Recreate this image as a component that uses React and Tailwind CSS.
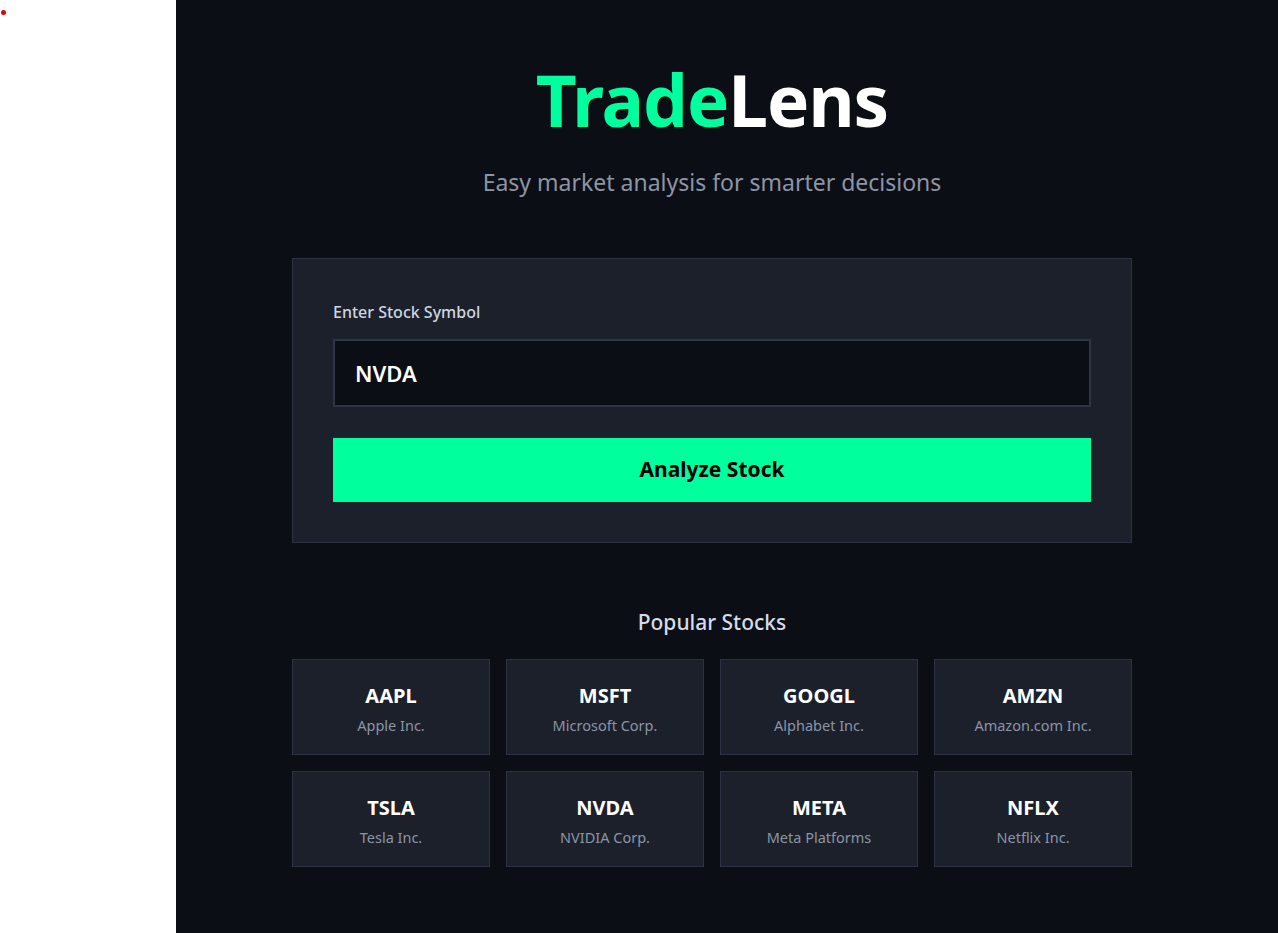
import React, { useState } from "react";

const stocks = [
  { symbol: "AAPL", name: "Apple Inc." },
  { symbol: "MSFT", name: "Microsoft Corp." },
  { symbol: "GOOGL", name: "Alphabet Inc." },
  { symbol: "AMZN", name: "Amazon.com Inc." },
  { symbol: "TSLA", name: "Tesla Inc." },
  { symbol: "NVDA", name: "NVIDIA Corp." },
  { symbol: "META", name: "Meta Platforms" },
  { symbol: "NFLX", name: "Netflix Inc." },
];

export default function App() {
  const [symbol, setSymbol] = useState("NVDA");

  return (
    <div className="min-h-screen flex font-['Noto_Sans',sans-serif]">
      <aside className="w-[176px] shrink-0 bg-white pt-[10px] pl-[1px]">
        <div className="w-[5px] h-[5px] rounded-full bg-red-600" />
      </aside>

      <main className="flex-1 bg-[#0b0e15] pr-[30px] pt-[58px] pb-[66px]">
        <div className="w-[840px] mx-auto">
          <h1 className="text-center text-[71px] leading-[84px] font-bold tracking-[-1px]">
            <span className="text-[#00ff9d]">Trade</span>
            <span className="text-white">Lens</span>
          </h1>
          <p className="mt-[24px] text-center text-[23px] leading-[32px] text-[#8b95a5]">
            Easy market analysis for smarter decisions
          </p>

          <div className="mt-[60px] bg-[#1b202b] border border-[#2c3242] px-[40px] pt-[41px] pb-[40px]">
            <label className="block text-[16px] leading-[24px] font-medium text-[#cfd6e0]">
              Enter Stock Symbol
            </label>
            <input
              value={symbol}
              onChange={(e) => setSymbol(e.target.value.toUpperCase())}
              className="mt-[15px] w-full h-[68px] bg-[#0b0e15] border-2 border-[#2d3446] px-[20px] text-[22px] font-semibold text-white outline-none"
            />
            <button className="mt-[31px] w-full h-[64px] bg-[#00ff9d] text-black text-[21px] font-bold">
              Analyze Stock
            </button>
          </div>

          <h2 className="mt-[64px] text-center text-[21px] leading-[30px] font-medium text-[#d6dce6]">
            Popular Stocks
          </h2>
          <div className="mt-[22px] grid grid-cols-4 gap-[16px]">
            {stocks.map((s) => (
              <div
                key={s.symbol}
                className="h-[96px] pt-[3px] bg-[#1b202b] border border-[#2c3242] flex flex-col items-center justify-center cursor-pointer hover:border-[#00ff9d]"
              >
                <div className="text-[20px] leading-[26px] font-bold text-white">{s.symbol}</div>
                <div className="mt-[6px] text-[14.5px] leading-[20px] text-[#8b95a5]">{s.name}</div>
              </div>
            ))}
          </div>
        </div>
      </main>
    </div>
  );
}
